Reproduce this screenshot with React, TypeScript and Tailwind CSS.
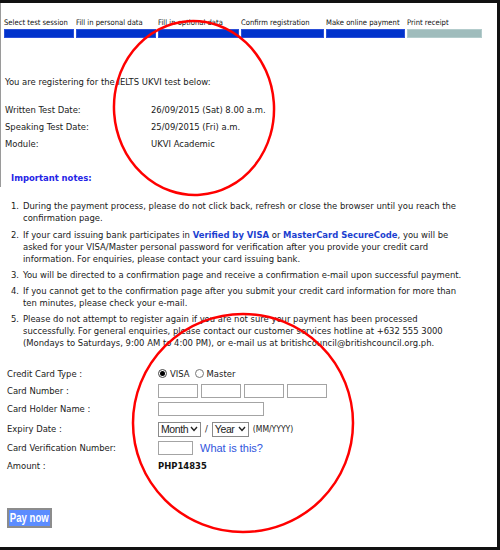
import React from "react";

const STEPS = [
  { label: "Select test session", w: "w-[70px]", done: true },
  { label: "Fill in personal data", w: "w-[80px]", done: true },
  { label: "Fill in optional data", w: "w-[81px]", done: true },
  { label: "Confirm registration", w: "w-[83px]", done: true },
  { label: "Make online payment", w: "w-[79px]", done: true },
  { label: "Print receipt", w: "w-[75px]", done: false },
];

function Radio({ checked }: { checked?: boolean }) {
  return (
    <span
      className={`inline-flex h-[9px] w-[9px] items-center justify-center rounded-full border ${
        checked ? "border-[#444]" : "border-[#777]"
      } bg-white`}
    >
      {checked && <span className="h-[5px] w-[5px] rounded-full bg-black" />}
    </span>
  );
}

function TextBox({ w }: { w: string }) {
  return <span className={`block h-[14px] ${w} border border-[#a4a4a4] bg-white`} />;
}

function Select({ label, w }: { label: string; w: string }) {
  return (
    <span
      className={`flex h-[15px] ${w} items-center justify-between border border-[#8a8a8a] bg-white pl-[2px] pr-[2px] font-['Liberation_Sans',Arial,sans-serif] text-[10.5px] leading-none tracking-[-0.4px] text-[#222]`}
    >
      {label}
      <svg width="8" height="6" viewBox="0 0 8 6" className="shrink-0">
        <polyline points="1,1 4,4.5 7,1" fill="none" stroke="#222" strokeWidth="1.4" />
      </svg>
    </span>
  );
}

export default function App() {
  return (
    <div className="relative h-[550px] w-[500px] overflow-hidden border-t-[3px] border-r-[3px] border-b-[3px] border-[#111] bg-white font-['DejaVu_Sans_Condensed','DejaVu_Sans',sans-serif] text-[9.4px] text-[#1a1a1a]">
      <div className="border-l border-[#9a9a9a] pb-[34px]">
        {/* Progress steps */}
        <div className="flex gap-[2px] pl-[3px] pt-[15px]">
          {STEPS.map((s) => (
            <div key={s.label} className={s.w}>
              <div className="h-[10px] whitespace-nowrap text-[7.6px] leading-[10px] text-[#111]">{s.label}</div>
              <div
                className={`mt-[1px] h-[9px] ${
                  s.done ? "bg-[#0033cc] border border-[#2a4fd8]" : "bg-[#9fbcbc] border border-[#b3cccc]"
                }`}
              />
            </div>
          ))}
        </div>

        {/* Test info */}
        <div className="mt-[38px] h-[12px] pl-[4px] leading-[12px]">
          You are registering for the IELTS UKVI test below:
        </div>
        <div className="mt-[14px] pl-[4px]">
          {[
            ["Written Test Date:", "26/09/2015 (Sat) 8.00 a.m."],
            ["Speaking Test Date:", "25/09/2015 (Fri) a.m."],
            ["Module:", "UKVI Academic"],
          ].map(([k, v]) => (
            <div key={k} className="flex h-[17px] items-center">
              <span className="w-[146px]">{k}</span>
              <span>{v}</span>
            </div>
          ))}
        </div>
      </div>

      {/* Notes */}
      <div className="-mt-[15px] h-[12px] pl-[11px] font-bold leading-[12px] text-[#2424e6]">Important notes:</div>
      <ol className="mt-[16px] pl-[11px] leading-[12px]">
        <li className="mb-[5px] flex">
          <span className="w-[12px] shrink-0">1.</span>
          <span className="whitespace-nowrap">
            During the payment process, please do not click back, refresh or close the browser until you reach the
            <br />
            confirmation page.
          </span>
        </li>
        <li className="mb-[4px] flex">
          <span className="w-[12px] shrink-0">2.</span>
          <span className="whitespace-nowrap">
            If your card issuing bank participates in{" "}
            <b className="text-[#1c3fd0]">Verified by VISA</b> or{" "}
            <b className="text-[#1c3fd0]">MasterCard SecureCode</b>, you will be
            <br />
            asked for your VISA/Master personal password for verification after you provide your credit card
            <br />
            information. For enquiries, please contact your card issuing bank.
          </span>
        </li>
        <li className="mb-[4px] flex">
          <span className="w-[12px] shrink-0">3.</span>
          <span className="whitespace-nowrap">
            You will be directed to a confirmation page and receive a confirmation e-mail upon successful payment.
          </span>
        </li>
        <li className="mb-[4px] flex">
          <span className="w-[12px] shrink-0">4.</span>
          <span className="whitespace-nowrap">
            If you cannot get to the confirmation page after you submit your credit card information for more than
            <br />
            ten minutes, please check your e-mail.
          </span>
        </li>
        <li className="flex">
          <span className="w-[12px] shrink-0">5.</span>
          <span className="whitespace-nowrap">
            Please do not attempt to register again if you are not sure your payment has been processed
            <br />
            successfully. For general enquiries, please contact our customer services hotline at +632 555 3000
            <br />
            (Mondays to Saturdays, 9:00 AM to 4:00 PM), or e-mail us at britishcouncil@britishcouncil.org.ph.
          </span>
        </li>
      </ol>

      {/* Payment form */}
      <div className="mt-[17px] pl-[7px]">
        <div className="flex h-[16px] items-center">
          <span className="w-[151px]">Credit Card Type :</span>
          <span className="flex items-center gap-[3px]">
            <Radio checked />
            <span className="mr-[2px]">VISA</span>
            <Radio />
            <span>Master</span>
          </span>
        </div>
        <div className="flex h-[18px] items-center">
          <span className="w-[151px]">Card Number :</span>
          <span className="flex gap-[3px]">
            <TextBox w="w-[40px]" />
            <TextBox w="w-[40px]" />
            <TextBox w="w-[40px]" />
            <TextBox w="w-[40px]" />
          </span>
        </div>
        <div className="flex h-[18px] items-center">
          <span className="w-[151px]">Card Holder Name :</span>
          <TextBox w="w-[106px]" />
        </div>
        <div className="flex h-[22px] items-center">
          <span className="w-[151px]">Expiry Date :</span>
          <Select label="Month" w="w-[43px]" />
          <span className="mx-[4px]">/</span>
          <Select label="Year" w="w-[37px]" />
          <span className="ml-[4px] text-[8.5px]">(MM/YYYY)</span>
        </div>
        <div className="flex h-[16px] items-center">
          <span className="w-[151px]">Card Verification Number:</span>
          <TextBox w="w-[35px]" />
          <span className="ml-[7px] font-['Liberation_Sans',Arial,sans-serif] text-[11px] text-[#2f55dd]">
            What is this?
          </span>
        </div>
        <div className="flex h-[20px] items-center">
          <span className="w-[151px]">Amount :</span>
          <span className="font-bold text-[#111]">PHP14835</span>
        </div>

        <button className="mt-[32px] flex h-[20px] w-[45px] items-center justify-center whitespace-nowrap border-2 border-[#8c8c8c] bg-[#5b8cff] font-['Liberation_Sans',Arial,sans-serif] text-[12px] font-bold text-white">
          <span className="inline-block scale-x-[0.8]">Pay now</span>
        </button>
      </div>

      {/* Red annotation circles */}
      <svg
        className="pointer-events-none absolute left-0 top-[-3px]"
        width="500"
        height="550"
        viewBox="0 0 500 550"
      >
        <ellipse cx="194" cy="108" rx="80" ry="87" fill="none" stroke="#ff0000" strokeWidth="2.5" transform="rotate(-4 194 108)" />
        <ellipse cx="243" cy="423" rx="110" ry="109" fill="none" stroke="#ff0000" strokeWidth="2.5" />
      </svg>
    </div>
  );
}
